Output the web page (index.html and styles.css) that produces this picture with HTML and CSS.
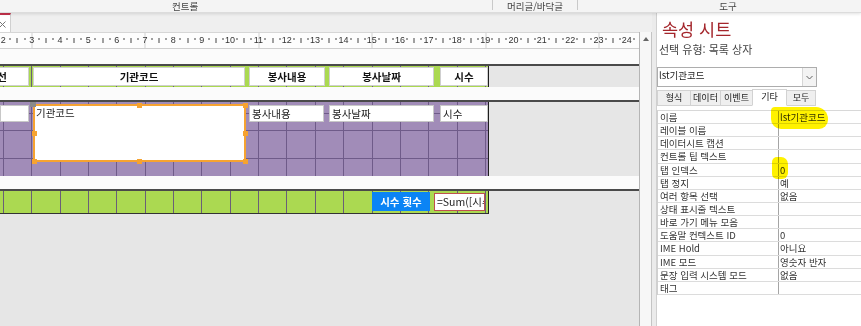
FILE: index.html
```html
<!DOCTYPE html>
<html lang="ko">
<head>
<meta charset="utf-8">
<title>속성 시트</title>
<link rel="stylesheet" href="styles.css">
</head>
<body>
<div class="app">
  <div class="ribbon">
    <div class="grp g1">컨트롤</div>
    <div class="sep"></div>
    <div class="grp g2">머리글/바닥글</div>
    <div class="sep"></div>
    <div class="grp g3">도구</div>
  </div>
  <div class="main">
    <div class="doc">
      <div class="tabrow">
        <div class="doctab"><svg width="7" height="7" viewBox="0 0 7 7"><path d="M0.5 0.5L6.5 6.5M6.5 0.5L0.5 6.5" stroke="#777" stroke-width="1"/></svg></div>
      </div>
      <div class="docbody">
        <div class="design">
          <div class="ruler">
            <div class="rtrack">
              <div class="cm"><b>2</b><i></i><i class="h"></i><i></i></div>
              <div class="cm"><b>3</b><i></i><i class="h"></i><i></i></div>
              <div class="cm"><b>4</b><i></i><i class="h"></i><i></i></div>
              <div class="cm"><b>5</b><i></i><i class="h"></i><i></i></div>
              <div class="cm"><b>6</b><i></i><i class="h"></i><i></i></div>
              <div class="cm"><b>7</b><i></i><i class="h"></i><i></i></div>
              <div class="cm"><b>8</b><i></i><i class="h"></i><i></i></div>
              <div class="cm"><b>9</b><i></i><i class="h"></i><i></i></div>
              <div class="cm"><b>10</b><i></i><i class="h"></i><i></i></div>
              <div class="cm"><b>11</b><i></i><i class="h"></i><i></i></div>
              <div class="cm"><b>12</b><i></i><i class="h"></i><i></i></div>
              <div class="cm"><b>13</b><i></i><i class="h"></i><i></i></div>
              <div class="cm"><b>14</b><i></i><i class="h"></i><i></i></div>
              <div class="cm"><b>15</b><i></i><i class="h"></i><i></i></div>
              <div class="cm"><b>16</b><i></i><i class="h"></i><i></i></div>
              <div class="cm"><b>17</b><i></i><i class="h"></i><i></i></div>
              <div class="cm"><b>18</b><i></i><i class="h"></i><i></i></div>
              <div class="cm"><b>19</b><i></i><i class="h"></i><i></i></div>
              <div class="cm"><b>20</b><i></i><i class="h"></i><i></i></div>
              <div class="cm"><b>21</b><i></i><i class="h"></i><i></i></div>
              <div class="cm"><b>22</b><i></i><i class="h"></i><i></i></div>
              <div class="cm"><b>23</b><i></i><i class="h"></i><i></i></div>
              <div class="cm"><b>24</b><i></i><i class="h"></i><i></i></div>
            </div>
          </div>
          <div class="secbar s1"></div>
          <div class="bandrow">
            <div class="band green hdr">
              <div class="lbl w0">선</div>
              <div class="lbl w1">기관코드</div>
              <div class="lbl w2">봉사내용</div>
              <div class="lbl w3">봉사날짜</div>
              <div class="lbl w4">시수</div>
            </div>
          </div>
          <div class="secbar s2"></div>
          <div class="bandrow">
            <div class="band purple">
              <div class="tb t0"></div>
              <div class="tb sel">기관코드
                <span class="hd hg"></span>
                <span class="hd h2"></span>
                <span class="hd h3"></span>
                <span class="hd h4"></span>
                <span class="hd h5"></span>
                <span class="hd h6"></span>
                <span class="hd h7"></span>
                <span class="hd h8"></span>
              </div>
              <div class="tb t2">봉사내용</div>
              <div class="tb t3">봉사날짜</div>
              <div class="tb t4">시수</div>
            </div>
          </div>
          <div class="secbar s3"></div>
          <div class="bandrow">
            <div class="band green ftr">
              <div class="blue">시수 횟수</div>
              <div class="sum">=Sum([시수])</div>
            </div>
          </div>
          <div class="rest"></div>
        </div>
        <div class="vscroll"><span class="uparrow"></span></div>
      </div>
    </div>
    <div class="split"></div>
    <div class="props">
      <div class="ptitle">속성 시트</div>
      <div class="psub">선택 유형: 목록 상자</div>
      <div class="combo">
        <span class="cv">lst기관코드</span>
        <span class="dd"><svg width="7" height="5" viewBox="0 0 7 5"><path d="M0.5 1L3.5 4L6.5 1" fill="none" stroke="#606060" stroke-width="1"/></svg></span>
      </div>
      <div class="ptabs">
        <span class="pt p1">형식</span>
        <span class="pt p2">데이터</span>
        <span class="pt p3">이벤트</span>
        <span class="pt p4 on">기타</span>
        <span class="pt p5">모두</span>
      </div>
      <div class="pgrid">
        <div class="row"><span>이름</span><span>lst기관코드</span></div>
        <div class="row"><span>레이블 이름</span><span></span></div>
        <div class="row"><span>데이터시트 캡션</span><span></span></div>
        <div class="row"><span>컨트롤 팁 텍스트</span><span></span></div>
        <div class="row"><span>탭 인덱스</span><span>0</span></div>
        <div class="row"><span>탭 정지</span><span>예</span></div>
        <div class="row"><span>여러 항목 선택</span><span>없음</span></div>
        <div class="row"><span>상태 표시줄 텍스트</span><span></span></div>
        <div class="row"><span>바로 가기 메뉴 모음</span><span></span></div>
        <div class="row"><span>도움말 컨텍스트 ID</span><span>0</span></div>
        <div class="row"><span>IME Hold</span><span>아니요</span></div>
        <div class="row"><span>IME 모드</span><span>영숫자 반자</span></div>
        <div class="row"><span>문장 입력 시스템 모드</span><span>없음</span></div>
        <div class="row"><span>태그</span><span></span></div>
      </div>
      <span class="hl hl1"></span>
      <span class="hl hl2"></span>
    </div>
  </div>
</div>
</body>
</html>
```

FILE: styles.css
```css
* { box-sizing: border-box; margin: 0; padding: 0; }

body {
  width: 861px;
  height: 326px;
  overflow: hidden;
  background: #fff;
  font-family: "Noto Sans CJK KR", "Noto Sans", sans-serif;
}

.app {
  width: 861px;
  height: 326px;
  display: flex;
  flex-direction: column;
}

/* ribbon group labels */
.ribbon {
  flex: none;
  height: 13px;
  display: flex;
  background: #f4f4f4;
  border-bottom: 1px solid #dcdcdc;
  box-shadow: 0 1px 3px rgba(0, 0, 0, 0.12);
  position: relative;
  z-index: 2;
  font-size: 9.5px;
  line-height: 13px;
  color: #444;
  white-space: nowrap;
}
.grp { flex: none; }
.g1 { width: 492px; padding-left: 172px; }
.g2 { width: 84px; text-align: center; }
.g3 { width: 300px; text-align: center; }
.sep { flex: none; width: 1px; height: 10px; background: #c9c9c9; }

.main { flex: 1; display: flex; min-height: 0; }

.doc { flex: none; width: 652px; display: flex; flex-direction: column; }

.tabrow { flex: none; height: 19px; background: #efefef; display: flex; }
.doctab {
  width: 11px;
  height: 19px;
  background: #fff;
  border-top: 2px solid #c4314b;
  border-right: 1px solid #d0d0d0;
  display: flex;
  align-items: center;
  padding-top: 1px;
}
.doctab svg { display: block; margin-left: -1px; }

.docbody { flex: 1; display: flex; min-height: 0; }

.design {
  flex: none;
  width: 640px;
  border-right: 1px solid #b5b5b5;
  background: #e6e6e6;
  display: flex;
  flex-direction: column;
  overflow: hidden;
}

/* ruler */
.ruler {
  flex: none;
  height: 17px;
  border-top: 1px solid #d6d6d6;
  border-bottom: 1px solid #cfcfcf;
  background-color: #fdfdfd;
  background-image: repeating-linear-gradient(90deg, #d0d0d0 0 1px, transparent 1px 113.4px);
  background-position: 31.5px 0;
  overflow: hidden;
}
.rtrack { display: flex; height: 15px; margin-left: 3.3px; }
.cm {
  flex: none;
  width: 28.35px;
  height: 15px;
  display: grid;
  grid-template-columns: repeat(4, minmax(0, 1fr));
  align-items: center;
}
.cm b {
  justify-self: start;
  transform: translateX(-50%);
  font-family: "Liberation Sans", sans-serif;
  font-weight: 400;
  font-size: 9px;
  line-height: 15px;
  color: #333;
}
.cm i {
  justify-self: start;
  width: 1px;
  height: 2px;
  background: #444;
  transform: translate(-50%, -2px);
}
.cm i.h { height: 5px; transform: translate(-50%, 0); }

/* section bars */
.secbar { flex: none; background: #fbfbfb; border-bottom: 2px solid #4a4a4a; }
.s1 { height: 17px; }
.s2 { height: 15px; }
.s3 { height: 15px; }

.bandrow { flex: none; display: flex; }
.band {
  flex: none;
  width: 489px;
  border-right: 1px solid #1e1e1e;
  display: flex;
  align-items: flex-start;
  overflow: hidden;
}
.green {
  background-color: #abd951;
  background-image: repeating-linear-gradient(90deg, #6a5e78 0 1px, transparent 1px 28.35px);
  background-position: 3px 0;
}
.hdr { height: 21px; }
.purple {
  height: 74px;
  background-color: #a18cb8;
  background-image:
    repeating-linear-gradient(90deg, #6f5b89 0 1px, transparent 1px 28.35px),
    repeating-linear-gradient(180deg, #6f5b89 0 1px, transparent 1px 28.35px);
  background-position: 3px 0, 0 28px;
}
.ftr {
  height: 23px;
  border-bottom: 1px solid #333;
  justify-content: flex-end;
  padding-right: 3px;
}

/* header labels */
.lbl {
  flex: none;
  height: 19px;
  margin-top: 1px;
  background: #fff;
  border: 1px solid #cfcfcf;
  font-weight: 700;
  font-size: 10.5px;
  line-height: 17px;
  text-align: center;
  color: #111;
  white-space: nowrap;
  overflow: hidden;
}
.w0 { width: 89px; margin-left: -60px; text-align: right; padding-right: 21px; }
.w1 { width: 212px; margin-left: 4px; }
.w2 { width: 76px; margin-left: 4px; }
.w3 { width: 105px; margin-left: 4px; }
.w4 { width: 48px; margin-left: 6px; }

/* detail text boxes */
.tb {
  flex: none;
  height: 17px;
  margin-top: 3px;
  background: #fff;
  border: 1px solid #c8c8c8;
  font-size: 10.5px;
  line-height: 15px;
  padding-left: 2px;
  color: #222;
  white-space: nowrap;
}
.t0 { width: 29px; }
.t2 { width: 75px; margin-left: 3px; }
.t3 { width: 105px; margin-left: 5px; }
.t4 { width: 48px; margin-left: 6px; }
.sel {
  position: relative;
  width: 213px;
  height: 58px;
  margin-top: 2px;
  margin-left: 4px;
  border: 2px solid #f6a331;
  padding-left: 1px;
  line-height: 14px;
}
.hd { position: absolute; width: 5px; height: 5px; background: #f6a331; }
.hg { width: 6px; height: 6px; left: -5px; top: -5px; background: #8a8a8a; }
.h2 { left: 102px; top: -3.5px; }
.h3 { left: 207.5px; top: -3.5px; }
.h4 { left: -3.5px; top: 24.5px; }
.h5 { left: 207.5px; top: 24.5px; }
.h6 { left: -3.5px; top: 52.5px; }
.h7 { left: 102px; top: 52.5px; }
.h8 { left: 207.5px; top: 52.5px; }

/* footer */
.blue {
  flex: none;
  width: 58px;
  height: 19px;
  margin-top: 1px;
  background: #0b84f5;
  color: #fff;
  font-weight: 700;
  font-size: 10.5px;
  line-height: 19px;
  text-align: center;
  white-space: nowrap;
}
.sum {
  flex: none;
  width: 51px;
  height: 18px;
  margin-top: 2px;
  margin-left: 4px;
  background: #fff;
  border: 1px solid #c0504d;
  font-size: 10.5px;
  line-height: 16px;
  padding-left: 2px;
  color: #222;
  white-space: nowrap;
  overflow: hidden;
}

.rest { flex: 1; }

/* vertical scrollbar */
.vscroll {
  flex: none;
  width: 12px;
  background: #f7f7f7;
  border-right: 1px solid #c4c4c4;
  display: flex;
  justify-content: center;
}
.uparrow {
  width: 0;
  height: 0;
  margin-top: 5px;
  border-left: 3px solid transparent;
  border-right: 3px solid transparent;
  border-bottom: 4px solid #666;
}

.split { flex: none; width: 4px; background: #ebebeb; }

/* property sheet */
.props {
  flex: 1;
  position: relative;
  background: #fff;
  border-left: 1px solid #d0d0d0;
}
.ptitle {
  margin-top: 5px;
  padding-left: 5px;
  height: 22px;
  font-size: 17.5px;
  line-height: 22px;
  color: #a4262c;
  white-space: nowrap;
}
.psub {
  margin-top: 3px;
  padding-left: 2px;
  font-size: 11px;
  line-height: 12px;
  color: #444;
  white-space: nowrap;
}
.combo {
  margin-top: 12px;
  width: 160px;
  height: 20px;
  border: 1px solid #adadad;
  display: flex;
  justify-content: space-between;
}
.cv { font-size: 9.5px; line-height: 15px; padding-left: 1px; color: #222; }
.dd {
  width: 14px;
  border-left: 1px solid #d6d6d6;
  background: #f3f3f3;
  display: flex;
  align-items: center;
  justify-content: center;
}
.dd svg { display: block; }

.ptabs { margin-top: 2px; height: 17px; display: flex; align-items: flex-end; }
.pt {
  flex: none;
  height: 16px;
  margin-right: -1px;
  border: 1px solid #d2d2d2;
  background: #efefef;
  font-size: 9px;
  line-height: 14px;
  text-align: center;
  color: #222;
  white-space: nowrap;
}
.pt.on { height: 17px; background: #fff; border-bottom-color: #fff; position: relative; }
.p1 { width: 34px; }
.p2 { width: 31px; }
.p3 { width: 33px; }
.p4 { width: 35px; }
.p5 { width: 30px; }

.pgrid {
  margin-top: 4px;
  border-top: 1px solid #d8d8d8;
  border-left: 1px solid #d0d0d0;
}
.row {
  display: grid;
  grid-template-columns: 121px 1fr;
  height: 13.15px;
  border-bottom: 1px solid #dcdcdc;
  font-size: 9.5px;
  line-height: 12px;
  color: #333;
  white-space: nowrap;
}
.row span:first-child { border-right: 1px solid #a5a5a5; padding-left: 2px; }
.row span:last-child { padding-left: 1px; }

/* highlighter marks */
.hl {
  position: absolute;
  background: #fff200;
  mix-blend-mode: multiply;
}
.hl1 { left: 114px; top: 94px; width: 57px; height: 22px; border-radius: 4px 12px 9px 10px; }
.hl2 { left: 115px; top: 144px; width: 16px; height: 22px; border-radius: 5px 7px 6px 5px; }
```
